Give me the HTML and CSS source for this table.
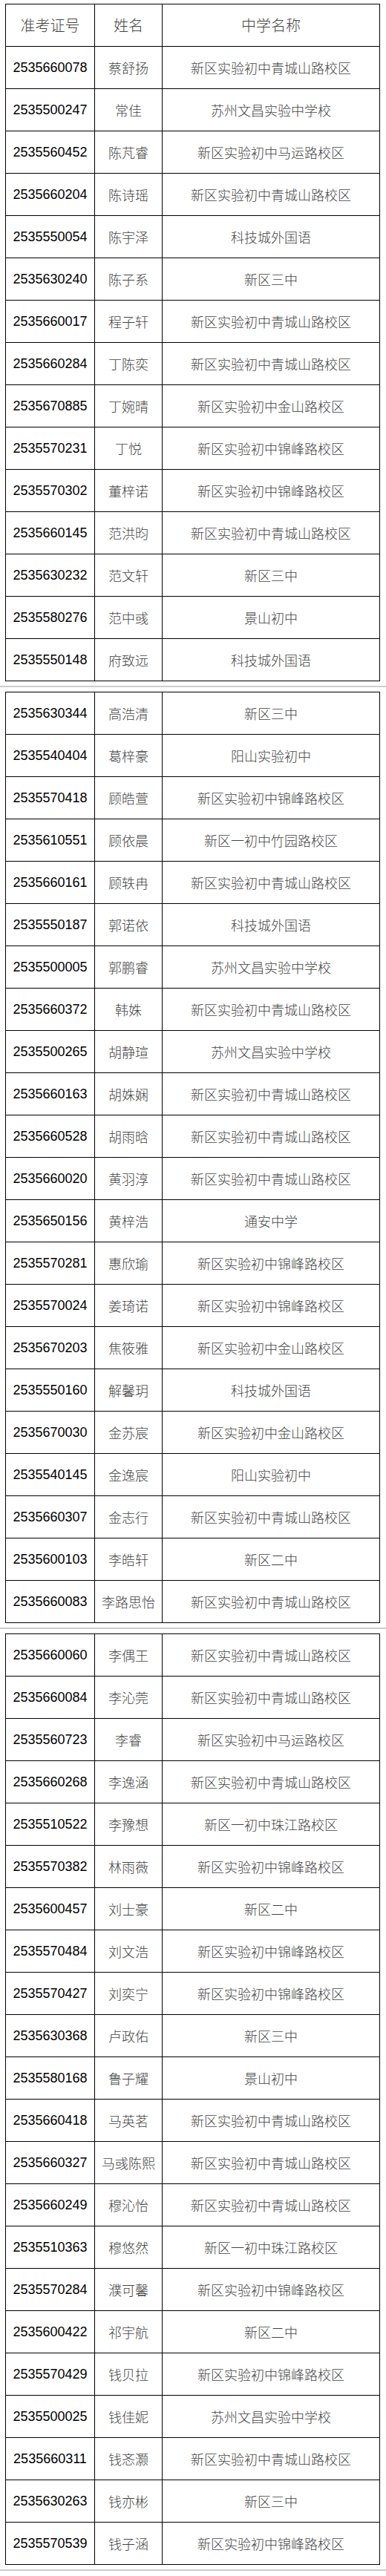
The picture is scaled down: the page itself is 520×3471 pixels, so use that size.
FILE: index.html
```html
<!DOCTYPE html>
<html lang="zh-CN">
<head>
<meta charset="utf-8">
<title>名单</title>
<link rel="stylesheet" href="styles.css">
</head>
<body>
<section class="block">
<table class="roster">
<colgroup><col class="c-id"><col class="c-name"><col class="c-school"></colgroup>
<thead><tr><th>准考证号</th><th>姓名</th><th>中学名称</th></tr></thead>
<tbody>
<tr><td class="id">2535660078</td><td>蔡舒扬</td><td>新区实验初中青城山路校区</td></tr>
<tr><td class="id">2535500247</td><td>常佳</td><td>苏州文昌实验中学校</td></tr>
<tr><td class="id">2535560452</td><td>陈芃睿</td><td>新区实验初中马运路校区</td></tr>
<tr><td class="id">2535660204</td><td>陈诗瑶</td><td>新区实验初中青城山路校区</td></tr>
<tr><td class="id">2535550054</td><td>陈宇泽</td><td>科技城外国语</td></tr>
<tr><td class="id">2535630240</td><td>陈子系</td><td>新区三中</td></tr>
<tr><td class="id">2535660017</td><td>程子轩</td><td>新区实验初中青城山路校区</td></tr>
<tr><td class="id">2535660284</td><td>丁陈奕</td><td>新区实验初中青城山路校区</td></tr>
<tr><td class="id">2535670885</td><td>丁婉晴</td><td>新区实验初中金山路校区</td></tr>
<tr><td class="id">2535570231</td><td>丁悦</td><td>新区实验初中锦峰路校区</td></tr>
<tr><td class="id">2535570302</td><td>董梓诺</td><td>新区实验初中锦峰路校区</td></tr>
<tr><td class="id">2535660145</td><td>范洪昀</td><td>新区实验初中青城山路校区</td></tr>
<tr><td class="id">2535630232</td><td>范文轩</td><td>新区三中</td></tr>
<tr><td class="id">2535580276</td><td>范中彧</td><td>景山初中</td></tr>
<tr><td class="id">2535550148</td><td>府致远</td><td>科技城外国语</td></tr>
</tbody>
</table>
</section>
<section class="block">
<table class="roster">
<colgroup><col class="c-id"><col class="c-name"><col class="c-school"></colgroup>
<tbody>
<tr><td class="id">2535630344</td><td>高浩清</td><td>新区三中</td></tr>
<tr><td class="id">2535540404</td><td>葛梓豪</td><td>阳山实验初中</td></tr>
<tr><td class="id">2535570418</td><td>顾皓萱</td><td>新区实验初中锦峰路校区</td></tr>
<tr><td class="id">2535610551</td><td>顾依晨</td><td>新区一初中竹园路校区</td></tr>
<tr><td class="id">2535660161</td><td>顾轶冉</td><td>新区实验初中青城山路校区</td></tr>
<tr><td class="id">2535550187</td><td>郭诺依</td><td>科技城外国语</td></tr>
<tr><td class="id">2535500005</td><td>郭鹏睿</td><td>苏州文昌实验中学校</td></tr>
<tr><td class="id">2535660372</td><td>韩姝</td><td>新区实验初中青城山路校区</td></tr>
<tr><td class="id">2535500265</td><td>胡静瑄</td><td>苏州文昌实验中学校</td></tr>
<tr><td class="id">2535660163</td><td>胡姝娴</td><td>新区实验初中青城山路校区</td></tr>
<tr><td class="id">2535660528</td><td>胡雨晗</td><td>新区实验初中青城山路校区</td></tr>
<tr><td class="id">2535660020</td><td>黄羽淳</td><td>新区实验初中青城山路校区</td></tr>
<tr><td class="id">2535650156</td><td>黄梓浩</td><td>通安中学</td></tr>
<tr><td class="id">2535570281</td><td>惠欣瑜</td><td>新区实验初中锦峰路校区</td></tr>
<tr><td class="id">2535570024</td><td>姜琦诺</td><td>新区实验初中锦峰路校区</td></tr>
<tr><td class="id">2535670203</td><td>焦筱雅</td><td>新区实验初中金山路校区</td></tr>
<tr><td class="id">2535550160</td><td>解馨玥</td><td>科技城外国语</td></tr>
<tr><td class="id">2535670030</td><td>金苏宸</td><td>新区实验初中金山路校区</td></tr>
<tr><td class="id">2535540145</td><td>金逸宸</td><td>阳山实验初中</td></tr>
<tr><td class="id">2535660307</td><td>金志行</td><td>新区实验初中青城山路校区</td></tr>
<tr><td class="id">2535600103</td><td>李皓轩</td><td>新区二中</td></tr>
<tr><td class="id">2535660083</td><td>李路思怡</td><td>新区实验初中青城山路校区</td></tr>
</tbody>
</table>
</section>
<section class="block">
<table class="roster">
<colgroup><col class="c-id"><col class="c-name"><col class="c-school"></colgroup>
<tbody>
<tr><td class="id">2535660060</td><td>李偶王</td><td>新区实验初中青城山路校区</td></tr>
<tr><td class="id">2535660084</td><td>李沁莞</td><td>新区实验初中青城山路校区</td></tr>
<tr><td class="id">2535560723</td><td>李睿</td><td>新区实验初中马运路校区</td></tr>
<tr><td class="id">2535660268</td><td>李逸涵</td><td>新区实验初中青城山路校区</td></tr>
<tr><td class="id">2535510522</td><td>李豫想</td><td>新区一初中珠江路校区</td></tr>
<tr><td class="id">2535570382</td><td>林雨薇</td><td>新区实验初中锦峰路校区</td></tr>
<tr><td class="id">2535600457</td><td>刘士豪</td><td>新区二中</td></tr>
<tr><td class="id">2535570484</td><td>刘文浩</td><td>新区实验初中锦峰路校区</td></tr>
<tr><td class="id">2535570427</td><td>刘奕宁</td><td>新区实验初中锦峰路校区</td></tr>
<tr><td class="id">2535630368</td><td>卢政佑</td><td>新区三中</td></tr>
<tr><td class="id">2535580168</td><td>鲁子耀</td><td>景山初中</td></tr>
<tr><td class="id">2535660418</td><td>马英茗</td><td>新区实验初中青城山路校区</td></tr>
<tr><td class="id">2535660327</td><td>马彧陈熙</td><td>新区实验初中青城山路校区</td></tr>
<tr><td class="id">2535660249</td><td>穆沁怡</td><td>新区实验初中青城山路校区</td></tr>
<tr><td class="id">2535510363</td><td>穆悠然</td><td>新区一初中珠江路校区</td></tr>
<tr><td class="id">2535570284</td><td>濮可馨</td><td>新区实验初中锦峰路校区</td></tr>
<tr><td class="id">2535600422</td><td>祁宇航</td><td>新区二中</td></tr>
<tr><td class="id">2535570429</td><td>钱贝拉</td><td>新区实验初中锦峰路校区</td></tr>
<tr><td class="id">2535500025</td><td>钱佳妮</td><td>苏州文昌实验中学校</td></tr>
<tr><td class="id">2535660311</td><td>钱忞灏</td><td>新区实验初中青城山路校区</td></tr>
<tr><td class="id">2535630263</td><td>钱亦彬</td><td>新区三中</td></tr>
<tr><td class="id">2535570539</td><td>钱子涵</td><td>新区实验初中锦峰路校区</td></tr>
</tbody>
</table>
</section>
</body>
</html>
```
FILE: styles.css
```css
html, body {
  margin: 0;
  padding: 0;
  background: #fff;
}
body {
  padding-top: 5px;
  font-family: "Noto Sans CJK SC", "Liberation Sans", sans-serif;
}
.block {
  padding-bottom: 6px;
  margin-bottom: 6px;
  border-bottom: 2px solid #cccccc;
}
.roster {
  margin-left: 7px;
  width: 504px;
  border-collapse: collapse;
  table-layout: fixed;
}
.c-id { width: 120px; }
.c-name { width: 91px; }
.c-school { width: 293px; }
.roster th,
.roster td {
  border: 1px solid #000;
  height: 57px;
  padding: 0;
  box-sizing: border-box;
  text-align: center;
  vertical-align: middle;
  font-family: "Noto Sans CJK SC", sans-serif;
  font-weight: 300;
  font-size: 18px;
  line-height: 1;
  color: #444;
  white-space: nowrap;
}
.roster th {
  font-size: 20px;
}
.roster td.id {
  font-family: "Liberation Sans", Arial, sans-serif;
  font-weight: 400;
  color: #000;
  font-size: 18px;
}
```
